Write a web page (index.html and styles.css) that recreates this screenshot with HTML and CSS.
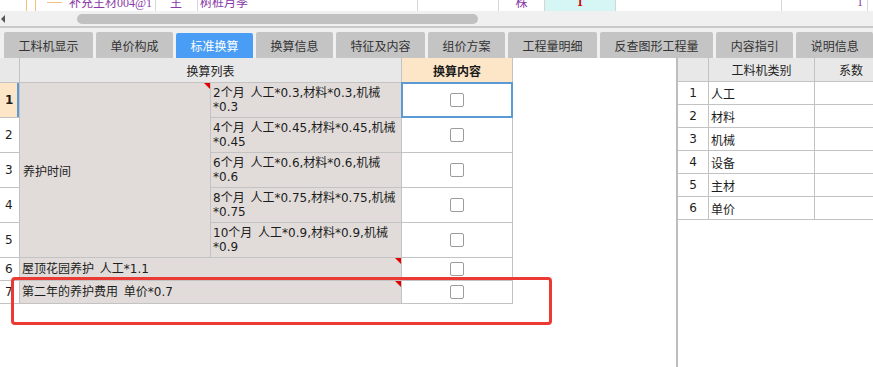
FILE: index.html
```html
<!DOCTYPE html>
<html lang="zh-CN">
<head>
<meta charset="utf-8">
<title>标准换算</title>
<link rel="stylesheet" href="styles.css">
</head>
<body>
<div class="top-strip">
  <div class="top-row">
    <div class="tc tc-name"><span class="vl"></span><span class="vl vl2"></span><span class="hl"></span><span class="nm">补充主材004@1</span></div>
    <div class="tc tc-type">主</div>
    <div class="tc tc-desc">树桩月季</div>
    <div class="tc tc-e1"></div>
    <div class="tc tc-unit">株</div>
    <div class="tc tc-qty">1</div>
    <div class="tc tc-e2"></div>
    <div class="tc tc-num">1</div>
    <div class="tc tc-e3"></div>
  </div>
</div>
<div class="hscroll">
  <span class="arrow"></span>
  <span class="thumb"></span>
</div>
<div class="tabs">
  <div class="tab">工料机显示</div>
  <div class="tab">单价构成</div>
  <div class="tab active">标准换算</div>
  <div class="tab">换算信息</div>
  <div class="tab">特征及内容</div>
  <div class="tab">组价方案</div>
  <div class="tab">工程量明细</div>
  <div class="tab">反查图形工程量</div>
  <div class="tab">内容指引</div>
  <div class="tab">说明信息</div>
</div>
<div class="main">
  <div class="left">
    <div class="grid-left">
      <div class="hd"></div>
      <div class="hd span2">换算列表</div>
      <div class="hd hd-peach">换算内容</div>

      <div class="rn sel">1</div>
      <div class="mg mark">养护时间</div>
      <div class="tx">2个月 人工*0.3,材料*0.3,机械<br>*0.3</div>
      <div class="cb cb-sel"><span class="box"></span></div>

      <div class="rn">2</div>
      <div class="tx">4个月 人工*0.45,材料*0.45,机械<br>*0.45</div>
      <div class="cb"><span class="box"></span></div>

      <div class="rn">3</div>
      <div class="tx">6个月 人工*0.6,材料*0.6,机械<br>*0.6</div>
      <div class="cb"><span class="box"></span></div>

      <div class="rn">4</div>
      <div class="tx">8个月 人工*0.75,材料*0.75,机械<br>*0.75</div>
      <div class="cb"><span class="box"></span></div>

      <div class="rn">5</div>
      <div class="tx">10个月 人工*0.9,材料*0.9,机械<br>*0.9</div>
      <div class="cb"><span class="box"></span></div>

      <div class="rn">6</div>
      <div class="tx span2 mark">屋顶花园养护 人工*1.1</div>
      <div class="cb"><span class="box"></span></div>

      <div class="rn">7</div>
      <div class="tx span2 mark">第二年的养护费用 单价*0.7</div>
      <div class="cb"><span class="box"></span></div>
    </div>
  </div>
  <div class="divider"></div>
  <div class="right">
    <div class="grid-right">
      <div class="rh"></div>
      <div class="rh">工料机类别</div>
      <div class="rh">系数</div>

      <div class="rr-n">1</div><div class="rr-t">人工</div><div class="rr-v"></div>
      <div class="rr-n">2</div><div class="rr-t">材料</div><div class="rr-v"></div>
      <div class="rr-n">3</div><div class="rr-t">机械</div><div class="rr-v"></div>
      <div class="rr-n">4</div><div class="rr-t">设备</div><div class="rr-v"></div>
      <div class="rr-n">5</div><div class="rr-t">主材</div><div class="rr-v"></div>
      <div class="rr-n">6</div><div class="rr-t">单价</div><div class="rr-v"></div>
    </div>
  </div>
  <div class="annot"></div>
</div>
</body>
</html>
```

FILE: styles.css
```css
* { box-sizing: border-box; margin: 0; padding: 0; }

html, body {
  width: 873px;
  height: 367px;
  overflow: hidden;
  background: #ffffff;
}

body {
  font-family: "DejaVu Sans", "Noto Sans CJK SC", sans-serif;
  font-size: 12px;
  color: #1c1c1c;
}

/* ---------- clipped row of upper table ---------- */
.top-strip {
  height: 11px;
  overflow: hidden;
  background: #fff;
}

.top-row {
  display: flex;
  height: 22px;
  margin-top: -9px;
  color: #8a3aa8;
  font-family: "Liberation Serif", "Noto Sans CJK SC", serif;
}

.tc {
  flex: none;
  height: 22px;
  display: flex;
  align-items: center;
  border-right: 1px solid #d6d6d6;
  white-space: nowrap;
  overflow: hidden;
}

.tc-name { width: 156px; padding-left: 26px; }
.tc-type { width: 42px; padding-left: 14px; }
.tc-desc { width: 220px; padding-left: 2px; }
.tc-e1 { width: 81px; }
.tc-unit { width: 46px; justify-content: center; }
.tc-qty {
  width: 71px;
  justify-content: center;
  background: #d6f6f6;
  color: #d00000;
  font-weight: bold;
}
.tc-e2 { width: 166px; }
.tc-num {
  width: 86px;
  justify-content: flex-end;
  padding-right: 4px;
}
.tc-e3 { width: 20px; border-right: none; }

.vl {
  flex: none;
  width: 1px;
  height: 22px;
  background: #f2c27a;
}
.vl2 { margin-left: 8px; }
.hl {
  flex: none;
  width: 15px;
  height: 1px;
  margin-left: 11px;
  background: #f2c27a;
}
.nm { margin-left: 7px; }

/* ---------- horizontal scrollbar ---------- */
.hscroll {
  height: 17px;
  background: #f0f0f0;
  border-bottom: 2px solid #c9c9c9;
  display: flex;
  align-items: center;
}

.arrow {
  flex: none;
  width: 0;
  height: 0;
  margin-left: 1px;
  border-right: 4px solid #555;
  border-top: 4px solid transparent;
  border-bottom: 4px solid transparent;
}

.thumb {
  flex: none;
  width: 401px;
  height: 10px;
  margin-left: 72px;
  border-radius: 5px;
  background: #c1c1c1;
}

/* ---------- tabs ---------- */
.tabs {
  height: 30px;
  background: #f0f0f0;
  display: flex;
  align-items: flex-end;
  gap: 3px;
  padding-left: 4px;
  overflow: hidden;
}

.tab {
  flex: none;
  height: 26px;
  padding: 0 14.5px;
  background: #c4c4c4;
  color: #333;
  font-family: "Noto Sans CJK SC", sans-serif;
  font-size: 12px;
  display: flex;
  align-items: center;
  border-radius: 2px 2px 0 0;
  white-space: nowrap;
}

.tab.active {
  height: 25px;
  background: #4a9df5;
  color: #fff;
}

/* ---------- main area ---------- */
.main {
  position: relative;
  display: flex;
  height: 309px;
}

.left {
  flex: none;
  width: 676px;
  background: #fff;
}

.divider {
  flex: none;
  width: 2px;
  background: #bdbdbd;
}

.right {
  flex: 1;
  overflow: hidden;
  background: #fff;
}

/* left grid */
.grid-left {
  display: inline-grid;
  grid-template-columns: 19px 190px 190px 110px;
  grid-template-rows: 24px repeat(5, 34px) 22px 22px;
  gap: 1px;
  padding: 0 1px 1px 0;
  background: #c3c3c3;
  vertical-align: top;
}

.span2 { grid-column: span 2; }

.hd {
  background: #e8e8e8;
  display: flex;
  align-items: center;
  justify-content: center;
  font-family: "Noto Sans CJK SC", sans-serif;
  color: #222;
}

.hd-peach {
  background: #fde6c8;
  font-weight: bold;
  color: #1a1a1a;
}

.rn {
  background: #fff;
  display: flex;
  align-items: center;
  padding-left: 5px;
}

.rn.sel {
  background: #fde6c8;
  font-weight: bold;
  box-shadow: inset -2px 0 0 #5b9bd5;
}

.mg {
  grid-row: span 5;
  background: #e1dcda;
  display: flex;
  align-items: center;
  padding-left: 3px;
}

.tx {
  background: #e1dcda;
  display: flex;
  align-items: center;
  padding: 0 2px;
  line-height: 14px;
  white-space: nowrap;
  word-spacing: 2px;
}

.mark { position: relative; }
.mark::after {
  content: "";
  position: absolute;
  top: 0;
  right: 0;
  width: 0;
  height: 0;
  border-left: 6px solid transparent;
  border-top: 6px solid #e00000;
}

.cb {
  background: #fff;
  display: flex;
  align-items: center;
  justify-content: center;
}

.cb-sel {
  position: relative;
  z-index: 1;
  box-shadow: 0 0 0 1px #5b9bd5, inset 0 0 0 1px #5b9bd5;
}

.box {
  width: 14px;
  height: 14px;
  border: 1px solid #9c9c9c;
  border-radius: 2px;
  background: #fff;
}

/* right grid */
.grid-right {
  display: inline-grid;
  grid-template-columns: 30px 105px 72px;
  grid-template-rows: 23px repeat(6, 22px);
  gap: 1px;
  padding: 0 1px 1px 0;
  background: #c3c3c3;
  vertical-align: top;
}

.rh {
  background: #e8e8e8;
  display: flex;
  align-items: center;
  justify-content: center;
  font-family: "Noto Sans CJK SC", sans-serif;
  color: #222;
}

.rr-n {
  background: #fff;
  display: flex;
  align-items: center;
  justify-content: center;
}

.rr-t {
  background: #fff;
  display: flex;
  align-items: center;
  padding-left: 2px;
}

.rr-v { background: #fff; }

/* red annotation */
.annot {
  position: absolute;
  left: 11px;
  top: 219px;
  width: 541px;
  height: 48px;
  border: 3px solid #eb3a34;
  border-radius: 4px;
  pointer-events: none;
}
```
